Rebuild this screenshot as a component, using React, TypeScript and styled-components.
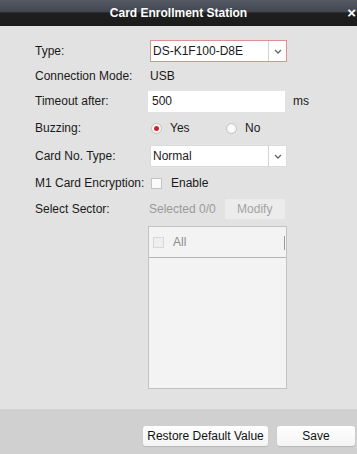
import React from "react";
import styled, { createGlobalStyle } from "styled-components";

const GlobalStyle = createGlobalStyle`
  html, body {
    margin: 0;
    padding: 0;
    background: #e2e2e2;
  }
  body {
    font-family: "Liberation Sans", Arial, sans-serif;
    font-size: 12px;
    color: #1a1a1a;
  }
`;

const Dialog = styled.div`
  width: 357px;
  height: 454px;
  display: flex;
  flex-direction: column;
  background: #e2e2e2;
  overflow: hidden;
`;

const TitleBar = styled.div`
  position: relative;
  height: 26px;
  flex: none;
  display: flex;
  align-items: center;
  justify-content: center;
  background: linear-gradient(180deg, #555b66 0%, #41464f 45%, #1f1f1f 50%, #1b1b1b 100%);
  color: #ffffff;
  font-weight: bold;
  font-size: 12px;
`;

const Close = styled.span`
  position: absolute;
  right: 1px;
  top: 4px;
  font-size: 15px;
  font-weight: bold;
  color: #ffffff;
`;

const Body = styled.div`
  flex: 1;
  padding: 13px 0 0 35px;
`;

const Form = styled.div`
  display: grid;
  grid-template-columns: 113px 1fr;
`;

const Label = styled.div<{ $h: number }>`
  height: ${(p) => p.$h}px;
  display: flex;
  align-items: center;
`;

const Field = styled.div<{ $h: number }>`
  height: ${(p) => p.$h}px;
  display: flex;
  align-items: center;
`;

const Select = styled.div<{ $focus?: boolean }>`
  width: 137px;
  height: 22px;
  margin-left: 2px;
  display: flex;
  background: #ffffff;
  border: 1px solid ${(p) => (p.$focus ? "#de8f8f" : "#dcdcdc")};
  box-sizing: border-box;
`;

const SelectValue = styled.div`
  flex: 1;
  display: flex;
  align-items: center;
  padding-left: 2px;
`;

const SelectArrow = styled.div`
  width: 17px;
  border-left: 1px solid #d4d4d4;
  display: flex;
  align-items: center;
  justify-content: center;
`;

const PlainText = styled.span`
  margin-left: 2px;
`;

const TextInput = styled.div`
  width: 137px;
  height: 21px;
  background: #ffffff;
  display: flex;
  align-items: center;
  padding-left: 4px;
  box-sizing: border-box;
`;

const Unit = styled.span`
  margin-left: 8px;
`;

const RadioGroup = styled.div`
  display: flex;
  align-items: center;
  margin-left: 3px;
`;

const RadioItem = styled.label<{ $w: number }>`
  display: flex;
  align-items: center;
  gap: 8px;
  width: ${(p) => p.$w}px;
`;

const RadioCircle = styled.span<{ $checked?: boolean }>`
  width: 11px;
  height: 11px;
  border-radius: 50%;
  border: 1px solid #c4c4c4;
  background: radial-gradient(circle, #ffffff 0%, #f0f0f0 100%);
  box-sizing: border-box;
  display: flex;
  align-items: center;
  justify-content: center;
  &::after {
    content: "";
    width: 5px;
    height: 5px;
    border-radius: 50%;
    background: ${(p) => (p.$checked ? "#c8242b" : "transparent")};
  }
`;

const CheckRow = styled.label`
  display: flex;
  align-items: center;
  gap: 9px;
  margin-left: 3px;
`;

const CheckBox = styled.span<{ $disabled?: boolean }>`
  width: 11px;
  height: 11px;
  border: 1px solid ${(p) => (p.$disabled ? "#d8d8d8" : "#c4c4c4")};
  background: ${(p) => (p.$disabled ? "#efefef" : "#fafafa")};
  box-sizing: border-box;
`;

const Muted = styled.span`
  color: #9a9a9a;
  margin-left: 1px;
`;

const SmallButton = styled.div`
  margin-left: 9px;
  width: 60px;
  height: 20px;
  display: flex;
  align-items: center;
  justify-content: center;
  background: #ececec;
  border-radius: 2px;
  color: #a2a2a2;
`;

const SectorBox = styled.div`
  margin: 4px 0 0 113px;
  width: 139px;
  height: 163px;
  border: 1px solid #c2c2c2;
  background: #f3f3f3;
  box-sizing: border-box;
`;

const SectorHead = styled.div`
  position: relative;
  height: 30px;
  border-bottom: 1px solid #b5b5b5;
  display: flex;
  align-items: center;
  gap: 9px;
  padding-left: 4px;
  color: #8c8c8c;
`;

const HeadDivider = styled.span`
  position: absolute;
  right: 1px;
  top: 9px;
  width: 1px;
  height: 14px;
  background: #9a9a9a;
`;

const Footer = styled.div`
  height: 45px;
  flex: none;
  background: #d0d0d0;
  display: flex;
  justify-content: flex-end;
  align-items: flex-start;
  gap: 9px;
  padding: 17px 2px 0 0;
  box-sizing: border-box;
`;

const Button = styled.div<{ $w: number }>`
  width: ${(p) => p.$w}px;
  height: 20px;
  display: flex;
  align-items: center;
  justify-content: center;
  background: linear-gradient(180deg, #ffffff 0%, #f4f4f4 100%);
  border-radius: 3px;
  box-shadow: 0 1px 1px rgba(0, 0, 0, 0.12);
  color: #111111;
`;

const Chevron = () => (
  <svg width="8" height="5" viewBox="0 0 8 5">
    <path d="M1 1 L4 4 L7 1" fill="none" stroke="#666" strokeWidth="1.3" />
  </svg>
);

type RowDef = { label: string; h: number; field: React.ReactNode };

export default function App() {
  const rows: RowDef[] = [
    {
      label: "Type:",
      h: 24,
      field: (
        <Select $focus>
          <SelectValue>DS-K1F100-D8E</SelectValue>
          <SelectArrow>
            <Chevron />
          </SelectArrow>
        </Select>
      ),
    },
    { label: "Connection Mode:", h: 25, field: <PlainText>USB</PlainText> },
    {
      label: "Timeout after:",
      h: 26,
      field: (
        <>
          <TextInput>500</TextInput>
          <Unit>ms</Unit>
        </>
      ),
    },
    {
      label: "Buzzing:",
      h: 28,
      field: (
        <RadioGroup>
          <RadioItem $w={75}>
            <RadioCircle $checked />
            Yes
          </RadioItem>
          <RadioItem $w={50}>
            <RadioCircle />
            No
          </RadioItem>
        </RadioGroup>
      ),
    },
    {
      label: "Card No. Type:",
      h: 28,
      field: (
        <Select>
          <SelectValue>Normal</SelectValue>
          <SelectArrow>
            <Chevron />
          </SelectArrow>
        </Select>
      ),
    },
    {
      label: "M1 Card Encryption:",
      h: 26,
      field: (
        <CheckRow>
          <CheckBox />
          Enable
        </CheckRow>
      ),
    },
    {
      label: "Select Sector:",
      h: 26,
      field: (
        <>
          <Muted>Selected 0/0</Muted>
          <SmallButton>Modify</SmallButton>
        </>
      ),
    },
  ];

  return (
    <>
      <GlobalStyle />
      <Dialog>
        <TitleBar>
          Card Enrollment Station
          <Close>×</Close>
        </TitleBar>
        <Body>
          <Form>
            {rows.map((r) => (
              <React.Fragment key={r.label}>
                <Label $h={r.h}>{r.label}</Label>
                <Field $h={r.h}>{r.field}</Field>
              </React.Fragment>
            ))}
          </Form>
          <SectorBox>
            <SectorHead>
              <CheckBox $disabled />
              All
              <HeadDivider />
            </SectorHead>
          </SectorBox>
        </Body>
        <Footer>
          <Button $w={125}>Restore Default Value</Button>
          <Button $w={78}>Save</Button>
        </Footer>
      </Dialog>
    </>
  );
}
